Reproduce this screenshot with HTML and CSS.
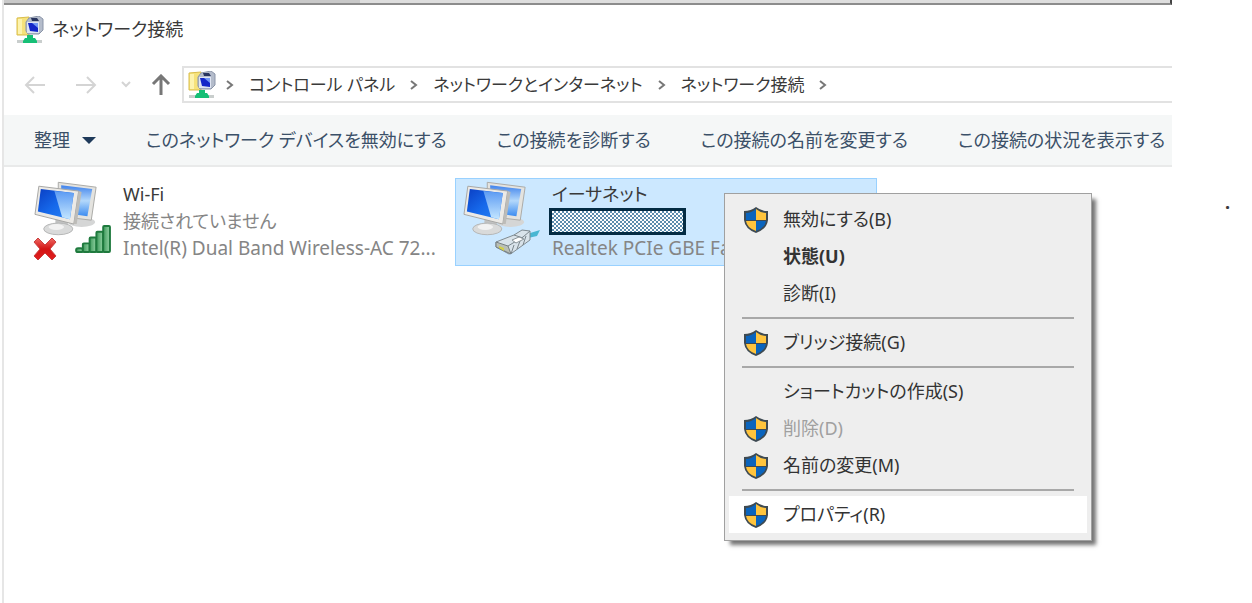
FILE: index.html
```
<!DOCTYPE html>
<html lang="ja">
<head>
  <meta charset="UTF-8">
  <meta name="viewport" content="width=device-width, initial-scale=1.0">
  <title>ネットワーク接続</title>
  <link rel="stylesheet" href="styles.css">
</head>
<body>
  <svg class="symbols" aria-hidden="true">
    <defs>
      <linearGradient id="screen-blue" x1="0" y1="0" x2="1" y2="1">
        <stop offset="0" stop-color="#0a3fc4"/>
        <stop offset="0.5" stop-color="#1668ea"/>
        <stop offset="1" stop-color="#2b86f5"/>
      </linearGradient>
      <linearGradient id="screen-shine" x1="0" y1="0" x2="0" y2="1">
        <stop offset="0" stop-color="#5b9af3"/>
        <stop offset="1" stop-color="#c4e6ff"/>
      </linearGradient>
      <linearGradient id="screen-back" x1="0" y1="0" x2="0" y2="1">
        <stop offset="0" stop-color="#3f82ec"/>
        <stop offset="0.5" stop-color="#b3d8fb"/>
        <stop offset="1" stop-color="#3b8bf0"/>
      </linearGradient>
      <linearGradient id="bar-green" x1="0" y1="0" x2="1" y2="0">
        <stop offset="0" stop-color="#3f9a5c"/>
        <stop offset="1" stop-color="#93d3a4"/>
      </linearGradient>
      <linearGradient id="cross-red" x1="0" y1="0" x2="0" y2="1">
        <stop offset="0" stop-color="#ee6a64"/>
        <stop offset="0.5" stop-color="#d41414"/>
        <stop offset="1" stop-color="#e02020"/>
      </linearGradient>
    </defs>

    <symbol id="icon-network" viewBox="0 0 28 28">
      <path d="M1 2l12-1v18H1z" fill="#f6e27a" stroke="#d9bd4c"/>
      <path d="M2 3h4v15H2z" fill="#fdf3ae"/>
      <path d="M13 2l10-2 4 3v11l-4 4H12l-2-3V6z" fill="#b4bccb" stroke="#8b95a8"/>
      <path d="M11 6h12v11H11z" fill="#dfe5f2"/>
      <path d="M12 7h10v9l-8-1z" fill="#1426c8"/>
      <path d="M16 7h6v5z" fill="#7398f4"/>
      <path d="M15 2h6l2 3h-7z" fill="#28345e"/>
      <path d="M1 24h25v3H1z" fill="#c9cecd"/>
      <path d="M11 19h6v3h2l2 3v2H7v-2l2-3h2z" fill="#16bf76"/>
    </symbol>

    <symbol id="icon-computers" viewBox="0 0 68 58">
      <ellipse cx="49" cy="42" rx="14" ry="5" fill="#d5d6d6"/>
      <path d="M25 1l39 5-5 34-34-4z" fill="#e4e3df" stroke="#a9a9a6"/>
      <path d="M28 4l32 4-5 28-27-4z" fill="url(#screen-back)"/>
      <path d="M22 36l12 3 2 10H22z" fill="#c1c2c2"/>
      <ellipse cx="25" cy="49" rx="15" ry="6" fill="#d9dada" stroke="#b5b6b6"/>
      <ellipse cx="23" cy="47" rx="8" ry="3" fill="#f2f2f2"/>
      <path d="M5 5l41 5-5 34L1 34z" fill="#eceae6" stroke="#a6a6a4"/>
      <path d="M46 10l3 1-5 33-3 0z" fill="#bdbcb8"/>
      <path d="M7 8l34 4-4 27-33-8z" fill="url(#screen-blue)"/>
      <path d="M21 10l20 2-4 27-8-2z" fill="url(#screen-shine)"/>
    </symbol>

    <symbol id="icon-signal" viewBox="0 0 38 31">
      <g fill="url(#bar-green)" stroke="#1f7a3e" stroke-width="2">
        <rect x="1" y="25" width="7" height="4" rx="2"/>
        <rect x="8" y="20" width="7" height="9" rx="1"/>
        <rect x="15" y="14" width="7" height="15" rx="1"/>
        <rect x="22" y="8" width="7" height="21" rx="1"/>
        <rect x="29" y="2" width="7" height="27" rx="1"/>
      </g>
    </symbol>

    <symbol id="icon-cross" viewBox="0 0 24 24">
      <path d="M5 1l7 7 7-7 4 4-6 7 6 7-4 4-7-7-7 7-4-4 6-7-6-7z" fill="url(#cross-red)" stroke="#c94040"/>
    </symbol>

    <symbol id="icon-plug" viewBox="0 0 46 28">
      <path d="M32 6l13-4-3 6-9 2z" fill="#49b6d2"/>
      <path d="M1 14l18-7 8-5 8 1v9l-18 13-3 1-13-7z" fill="#d9e3ea" stroke="#7f8a90"/>
      <path d="M1 14l12 4 3 8-15-7z" fill="#b9bfb6" stroke="#777f82"/>
      <path d="M13 18l15-9 7-6M16 26l3-9M19 7l9 3M22 21l3-8M28 17l3-9" fill="none" stroke="#7b868c"/>
      <path d="M17 12l7-3 5 2-8 4z" fill="#fff" stroke="#8c969b"/>
      <path d="M4 18l5 2v3l-5-3z" fill="#d3cf4a"/>
    </symbol>

    <symbol id="icon-shield" viewBox="0 0 26 28">
      <path d="M13 1Q8 5 1 5v9q1 9 12 13 11-4 12-13V5q-7 0-12-4z" fill="#3e4a52"/>
      <path d="M13 3Q8 7 3 7v7h10z" fill="#0a64bd"/>
      <path d="M13 3q5 4 10 4v7H13z" fill="#ffc43d"/>
      <path d="M3 15h10v10q-9-3-10-10z" fill="#ffc43d"/>
      <path d="M23 15H13v10q9-3 10-10z" fill="#0a64bd"/>
    </symbol>

    <symbol id="icon-chevron" viewBox="0 0 8 12">
      <path d="M1 2l5 4-5 4" fill="none" stroke="currentColor" stroke-width="2"/>
    </symbol>
  </svg>

  <div class="page">
    <div class="window">
      <div class="back-window"></div>

      <header class="title-bar">
        <svg class="network-icon" aria-hidden="true"><use href="#icon-network"/></svg>
        <h1>ネットワーク接続</h1>
      </header>

      <div class="address-row">
        <div class="history">
          <button class="history-btn" type="button" aria-label="戻る" disabled>
            <svg width="22" height="20" viewBox="0 0 22 20"><path d="M10 2L2 10l8 8M2 10h19"/></svg>
          </button>
          <button class="history-btn" type="button" aria-label="進む" disabled>
            <svg width="22" height="20" viewBox="0 0 22 20"><path d="M12 2l8 8-8 8M20 10H1"/></svg>
          </button>
          <button class="history-btn recent" type="button" aria-label="最近表示した場所" disabled>
            <svg width="10" height="20" viewBox="0 0 10 20"><path d="M1 7l4 4 4-4"/></svg>
          </button>
          <button class="history-btn up" type="button" aria-label="上へ">
            <svg width="20" height="22" viewBox="0 0 20 22"><path d="M2 10l8-8 8 8M10 2v19"/></svg>
          </button>
        </div>
        <nav class="address" aria-label="アドレス">
          <svg class="network-icon" aria-hidden="true"><use href="#icon-network"/></svg>
          <svg class="chevron" aria-hidden="true"><use href="#icon-chevron"/></svg>
          <a href="#control-panel">コントロール パネル</a>
          <svg class="chevron" aria-hidden="true"><use href="#icon-chevron"/></svg>
          <a href="#internet">ネットワークとインターネット</a>
          <svg class="chevron" aria-hidden="true"><use href="#icon-chevron"/></svg>
          <a href="#connections">ネットワーク接続</a>
          <svg class="chevron" aria-hidden="true"><use href="#icon-chevron"/></svg>
        </nav>
      </div>

      <div class="toolbar" role="toolbar" aria-label="コマンド">
        <button class="organize" type="button">整理 <span class="caret"></span></button>
        <button type="button">このネットワーク デバイスを無効にする</button>
        <button type="button">この接続を診断する</button>
        <button type="button">この接続の名前を変更する</button>
        <button type="button">この接続の状況を表示する</button>
      </div>

      <main class="connections" id="connections">
        <article class="connection">
          <div class="connection-icon">
            <svg class="computers" aria-hidden="true"><use href="#icon-computers"/></svg>
            <svg class="cross" aria-hidden="true"><use href="#icon-cross"/></svg>
            <svg class="signal" aria-hidden="true"><use href="#icon-signal"/></svg>
          </div>
          <div class="connection-text">
            <h2>Wi-Fi</h2>
            <p>接続されていません</p>
            <p class="device">Intel(R) Dual Band Wireless-AC 72...</p>
          </div>
        </article>

        <article class="connection selected">
          <div class="connection-icon">
            <svg class="computers" aria-hidden="true"><use href="#icon-computers"/></svg>
            <svg class="plug" aria-hidden="true"><use href="#icon-plug"/></svg>
          </div>
          <div class="connection-text">
            <h2>イーサネット</h2>
            <div class="masked"></div>
            <p class="device">Realtek PCIe GBE Fa</p>
          </div>

          <ul class="context-menu">
            <li><button type="button"><svg class="shield" aria-hidden="true"><use href="#icon-shield"/></svg>無効にする(B)</button></li>
            <li><button class="default" type="button">状態(U)</button></li>
            <li><button type="button">診断(I)</button></li>
            <li class="separator" role="separator"></li>
            <li><button type="button"><svg class="shield" aria-hidden="true"><use href="#icon-shield"/></svg>ブリッジ接続(G)</button></li>
            <li class="separator" role="separator"></li>
            <li><button type="button">ショートカットの作成(S)</button></li>
            <li><button type="button" disabled><svg class="shield" aria-hidden="true"><use href="#icon-shield"/></svg>削除(D)</button></li>
            <li><button type="button"><svg class="shield" aria-hidden="true"><use href="#icon-shield"/></svg>名前の変更(M)</button></li>
            <li class="separator" role="separator"></li>
            <li><button class="active" type="button"><svg class="shield" aria-hidden="true"><use href="#icon-shield"/></svg>プロパティ(R)</button></li>
          </ul>
        </article>
      </main>
    </div>
    <aside class="margin-note">.</aside>
  </div>
</body>
</html>
```
FILE: styles.css
```
:root {
  --text-color: #3a3a3a;
  --muted-color: #858585;
  --command-color: #3b5068;
  --line-color: #e2e2e2;
  --menu-bg: #eeeeee;
}

* {
  box-sizing: border-box;
}

body {
  margin: 0;
  font-family: "Noto Sans", "Noto Sans CJK JP", sans-serif;
  font-size: 18px;
  font-feature-settings: "palt";
  line-height: 27px;
  color: var(--text-color);
  background: #fff;
}

button {
  font: inherit;
  font-feature-settings: inherit;
  color: inherit;
  background: none;
  border: none;
  padding: 0;
}

h1, h2, p, ul {
  margin: 0;
  padding: 0;
  font-size: inherit;
  font-weight: normal;
}

.symbols {
  position: absolute;
  width: 0;
  height: 0;
}

.page {
  display: grid;
  grid-template-columns: minmax(0, 1fr) 80px;
  min-height: 100vh;
}

.window {
  margin-left: 2px;
  border-left: 2px solid #e6e6e6;
  overflow: hidden;
}

.back-window {
  height: 5px;
  background: linear-gradient(to right, #c9c9c9 356px, #dedede 356px);
  border-bottom: 2px solid #8c8c8c;
  border-right: 2px solid #444;
}

/* Title and address */
.title-bar {
  display: flex;
  align-items: center;
  gap: 8px;
  height: 49px;
  padding-left: 12px;
}

.network-icon {
  flex: none;
  width: 28px;
  height: 28px;
}

.address-row {
  display: flex;
  align-items: center;
  padding: 12px 0;
}

.history {
  display: flex;
  flex: none;
  align-items: center;
  width: 178px;
  padding-left: 20px;
}

.history-btn {
  display: flex;
  margin-right: 29px;
  color: #d4d4d4;
}

.history-btn + .history-btn {
  margin-right: 24px;
}

.history-btn + .history-btn.recent {
  margin-right: 20px;
}

.history-btn + .history-btn.up {
  margin-right: 0;
  color: #777;
}

.history-btn path {
  fill: none;
  stroke: currentColor;
  stroke-width: 2;
}

.history-btn.up path {
  stroke-width: 3;
}

.address {
  display: flex;
  flex: 1;
  align-items: center;
  height: 37px;
  padding-left: 4px;
  border: 2px solid var(--line-color);
  border-right: none;
  font-size: 17px;
  white-space: nowrap;
}

.address a {
  color: inherit;
  text-decoration: none;
}

.chevron {
  flex: none;
  width: 8px;
  height: 12px;
  margin: 0 15px;
  color: #777;
}

.network-icon + .chevron {
  margin-left: 10px;
}

/* Commands */
.toolbar {
  display: flex;
  align-items: center;
  gap: 50px;
  height: 52px;
  padding-left: 30px;
  color: var(--command-color);
  background: #f5f7f7;
  border-bottom: 2px solid #e9eaea;
  overflow: hidden;
  white-space: nowrap;
}

.toolbar button {
  flex: none;
}

.toolbar .organize {
  display: flex;
  align-items: center;
  gap: 12px;
}

.caret {
  border: 7px solid transparent;
  border-top-color: #1e3a5a;
  border-bottom: none;
}

/* Connections */
.connections {
  display: grid;
  grid-template-columns: repeat(2, minmax(0, 422px));
  gap: 7px;
  padding: 11px 0 0 22px;
}

.connection {
  position: relative;
  display: grid;
  grid-template-columns: 89px minmax(0, 1fr);
  height: 88px;
  padding: 2px 10px 2px 7px;
  border: 1px solid transparent;
}

.connection.selected {
  background: #cce8ff;
  border-color: #99d1ff;
}

.connection-icon {
  position: relative;
}

.computers {
  width: 66px;
  height: 57px;
}

.cross,
.signal,
.plug {
  position: absolute;
}

.cross {
  left: -1px;
  top: 56px;
  width: 24px;
  height: 24px;
}

.signal {
  left: 41px;
  top: 43px;
  width: 37px;
  height: 30px;
}

.plug {
  left: 32px;
  top: 47px;
  width: 46px;
  height: 28px;
}

.connection-text {
  white-space: nowrap;
}

.connection-text p {
  color: var(--muted-color);
}

.connection-text .device {
  font-size: 19px;
}

.masked {
  width: 137px;
  height: 27px;
  margin-left: -3px;
  background: repeating-conic-gradient(#5b8cad 0 25%, #fff 0 50%) 0 0 / 4px 4px;
  border: 3px solid #032b43;
}

/* Context menu */
.context-menu {
  position: absolute;
  z-index: 1;
  left: 268px;
  top: 14px;
  width: 368px;
  padding: 7px 4px;
  list-style: none;
  color: #333;
  background: var(--menu-bg);
  border: 1px solid #a0a0a0;
  box-shadow: 5px 5px 4px -1px rgba(0, 0, 0, 0.55);
}

.context-menu button {
  display: grid;
  grid-template-columns: 26px 1fr;
  column-gap: 14px;
  align-items: center;
  width: 100%;
  height: 37px;
  padding-left: 14px;
  text-align: left;
}

.context-menu button:not(:has(.shield)) {
  display: block;
  padding-left: 54px;
}

.context-menu .default {
  font-weight: bold;
}

.context-menu button:disabled {
  color: #a0a0a0;
}

.context-menu .active {
  background: #fff;
}

.shield {
  width: 26px;
  height: 28px;
}

.separator {
  height: 2px;
  margin: 5px 13px;
  background: #a8a8a8;
}

.margin-note {
  padding: 189px 0 0 53px;
  font-weight: bold;
}
```
